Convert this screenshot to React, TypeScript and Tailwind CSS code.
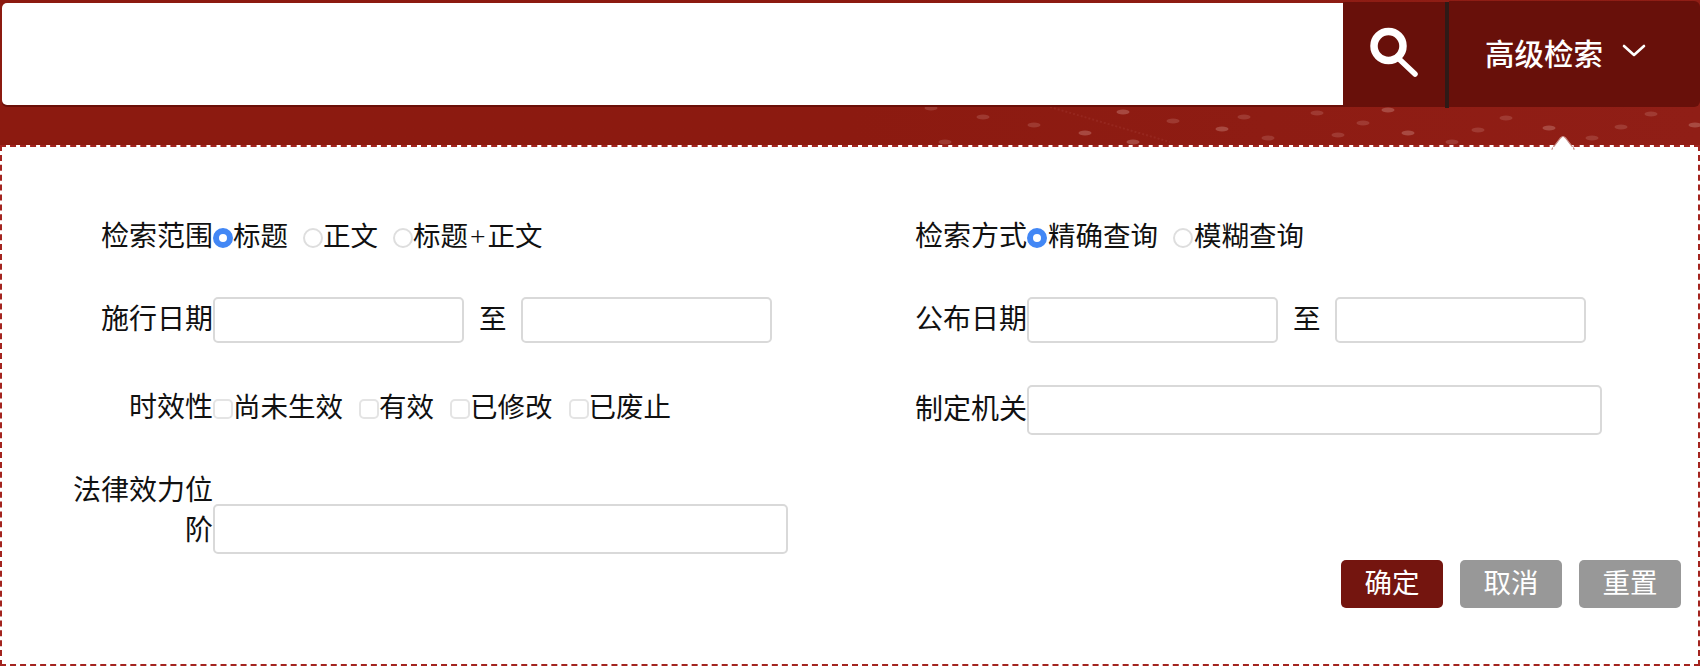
import React from "react";

const FONT = "font-['Liberation_Serif','Noto_Sans_CJK_SC',serif]";

function Radio({ on }: { on?: boolean }) {
  return on ? (
    <span className="block w-[20px] h-[20px] mt-[2px] shrink-0 rounded-full border-[6px] border-[#4287f5] bg-white" />
  ) : (
    <span className="block w-[20px] h-[20px] mt-[2px] shrink-0 rounded-full border-2 border-[#dedede] bg-white" />
  );
}

function Check() {
  return <span className="block w-[20px] h-[20px] mt-[2px] shrink-0 rounded-[5px] border-2 border-[#e4e4e4] bg-white" />;
}

function Label({ children, w }: { children: React.ReactNode; w: string }) {
  return <div className={`${w} shrink-0 text-right text-[28px] leading-[40px]`}>{children}</div>;
}

function Box({ w, h, top }: { w: string; h: string; top?: string }) {
  return <div className={`${w} ${h} ${top ?? ""} shrink-0 rounded-[5px] border-2 border-[#d9d9d9] bg-white`} />;
}

function Opt({ children, input, text }: { children: React.ReactNode; input: React.ReactNode; text?: string }) {
  return (
    <div className="flex items-center">
      {input}
      <span className={text}>{children}</span>
    </div>
  );
}

const SPECKS: [number, number][] = [
  [1123, 112], [1173, 121], [1244, 117], [1222, 129], [1268, 138], [1034, 125], [1085, 133], [983, 117], [931, 108], [1133, 142], [945, 142],
  [1317, 113], [1388, 110], [1363, 123], [1338, 135], [1408, 133], [1506, 118], [1478, 130], [1549, 128], [1621, 127], [1651, 114], [1695, 125], [1592, 138], [1452, 142],
];

export default function App() {
  return (
    <div className={`w-[1700px] h-[666px] relative overflow-hidden bg-linear-to-r from-[#8c1a10] from-50% to-[#901e16] text-[27.5px] text-[#111] ${FONT}`}>
      <svg className="absolute left-[900px] top-[100px]" width="800" height="45" viewBox="900 100 800 45">
        <path d="M1050 107 L1170 142" stroke="#a8413a" strokeWidth="2" opacity="0.3" strokeDasharray="2 2" fill="none" />
        {SPECKS.map(([x, y], i) => (
          <ellipse key={i} cx={x} cy={y} rx="6.5" ry="2.5" fill="#b9675f" opacity={i % 3 === 0 ? 0.6 : 0.4} />
        ))}
      </svg>
      <div className="flex h-[108px] pt-[1px] relative">
        <div className="flex-1 mt-[2px] h-[102px] bg-white rounded-l-[5px] ml-[2px] shadow-[0_2px_0_#6a0f08]" />
        <div className="w-[102px] h-[105px] mt-[1px] bg-[#68100a] flex items-center justify-center pb-[6px]">
          <svg width="52" height="52" viewBox="0 0 52 52" fill="none" stroke="white" strokeLinecap="round">
            <circle cx="20.5" cy="20" r="14.5" strokeWidth="7.5" />
            <path d="M30 32 L47 48" strokeWidth="5.5" />
          </svg>
        </div>
        <div className="w-[4px] h-[106px] mt-[1px] bg-[#2f1a17]" />
        <div className="w-[251px] h-[106px] bg-[#68100a] rounded-r-[6px] flex items-center text-white text-[29.5px] pl-[36px] gap-[19px] pb-[3px]">
          <span className="font-['Noto_Sans_CJK_SC',sans-serif] font-medium">高级检索</span>
          <svg className="mb-[5px]" width="24" height="13" viewBox="0 0 24 13" fill="none" stroke="white" strokeWidth="2.6" strokeLinecap="round" strokeLinejoin="round">
            <path d="M2 2 L12 11 L22 2" />
          </svg>
        </div>
      </div>

      <div className="absolute left-0 top-[145px] w-[1700px] h-[521px] bg-white border-2 border-dashed border-[#a3241f] flex">
        <div className="w-[812px] shrink-0 pt-[70px] flex flex-col">
          <div className="flex items-center h-[40px]">
            <Label w="w-[211px]">检索范围</Label>
            <div className="flex items-center gap-[15px]">
              <Opt input={<Radio on />}>标题</Opt>
              <Opt input={<Radio />}>正文</Opt>
              <Opt input={<Radio />}>
                标题<span className="mx-[2px]">+</span>正文
              </Opt>
            </div>
          </div>
          <div className="flex items-center mt-[40px] h-[46px]">
            <Label w="w-[211px]">施行日期</Label>
            <Box w="w-[251px]" h="h-[46px]" />
            <span className="ml-[15px] mr-[14px]">至</span>
            <Box w="w-[251px]" h="h-[46px]" />
          </div>
          <div className="flex items-center mt-[45px] h-[40px]">
            <Label w="w-[211px]">时效性</Label>
            <div className="flex items-center gap-[16px]">
              <Opt input={<Check />}>尚未生效</Opt>
              <Opt input={<Check />}>有效</Opt>
              <Opt input={<Check />}>已修改</Opt>
              <Opt input={<Check />}>已废止</Opt>
            </div>
          </div>
          <div className="flex items-start mt-[43px]">
            <Label w="w-[211px] pl-[60px]">法律效力位阶</Label>
            <Box w="w-[575px]" h="h-[50px]" top="mt-[33px]" />
          </div>
        </div>
        <div className="flex-1 pt-[70px] flex flex-col">
          <div className="flex items-center h-[40px]">
            <Label w="w-[213px]">检索方式</Label>
            <div className="flex items-center gap-[15px]">
              <Opt input={<Radio on />} text="ml-[1px]">精确查询</Opt>
              <Opt input={<Radio />} text="ml-[1px]">模糊查询</Opt>
            </div>
          </div>
          <div className="flex items-center mt-[40px] h-[46px]">
            <Label w="w-[213px]">公布日期</Label>
            <Box w="w-[251px]" h="h-[46px]" />
            <span className="ml-[15px] mr-[14px]">至</span>
            <Box w="w-[251px]" h="h-[46px]" />
          </div>
          <div className="flex items-center mt-[42px] h-[50px]">
            <Label w="w-[213px]">制定机关</Label>
            <Box w="w-[575px]" h="h-[50px]" />
          </div>
          <div className="flex justify-end gap-[17px] mt-[125px] pr-[17px] text-white">
            <div className="w-[102px] h-[48px] rounded-[5px] bg-[#74150f] flex items-center justify-center">确定</div>
            <div className="w-[102px] h-[48px] rounded-[5px] bg-[#989898] flex items-center justify-center">取消</div>
            <div className="w-[102px] h-[48px] rounded-[5px] bg-[#989898] flex items-center justify-center">重置</div>
          </div>
        </div>
      </div>

      <svg className="absolute left-[1550px] top-[134px]" width="26" height="16" viewBox="0 0 26 16">
        <path d="M2 15 L10.5 4 Q13 1 15.5 4 L24 15 Z" fill="white" stroke="#c98f8a" strokeWidth="1.2" />
        <rect x="3" y="13" width="20" height="3" fill="white" />
      </svg>
    </div>
  );
}
